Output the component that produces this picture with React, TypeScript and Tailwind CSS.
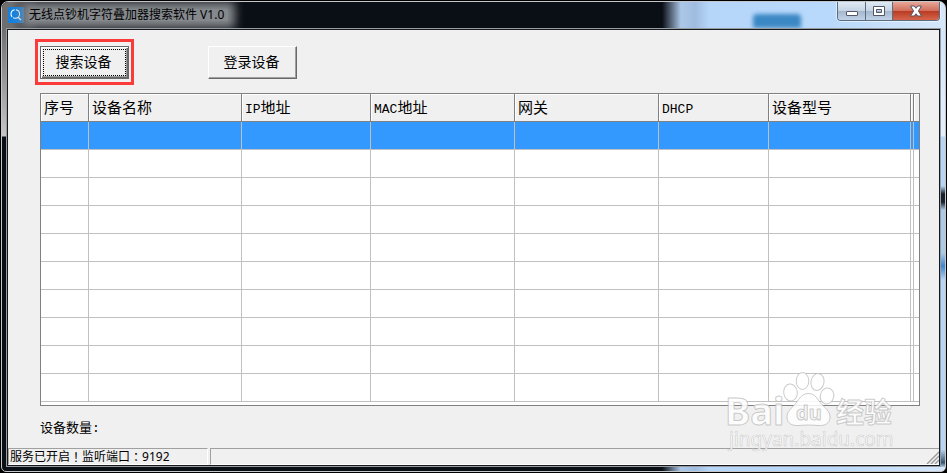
import { clsx } from 'clsx';

const columns = [
  { latin: '', label: '序号', width: 'w-[48px]' },
  { latin: '', label: '设备名称', width: 'w-[153px]' },
  { latin: 'IP', label: '地址', width: 'w-[129px]' },
  { latin: 'MAC', label: '地址', width: 'w-[144px]' },
  { latin: '', label: '网关', width: 'w-[144px]' },
  { latin: 'DHCP', label: '', width: 'w-[110px]' },
  { latin: '', label: '设备型号', width: 'w-[142px]' },
  { latin: '', label: '', width: 'w-[3px]' },
  { latin: '', label: '', width: 'w-[5px]' },
];

const rows = Array.from({ length: 10 }, (_, i) => i);

function AppIcon() {
  return (
    <svg className="w-4 h-4 shrink-0" viewBox="0 0 16 16" fill="none">
      <rect width="16" height="16" rx="1.5" fill="#1480e0" />
      <circle cx="7.3" cy="7" r="4.3" stroke="#fff" strokeWidth="1.1" strokeDasharray="9 1.2" />
      <path d="M10.4 10.4 13 13" stroke="#fff" strokeWidth="1.4" />
    </svg>
  );
}

function CaptionButtons() {
  return (
    <div className="flex h-[19px] rounded-b border border-t-0 border-[#5b6c80] overflow-hidden shadow-[0_0_0_1px_rgba(255,255,255,0.5)]">
      <button
        aria-label="最小化"
        className="w-7 flex items-center justify-center border-r border-[#5b6c80] bg-[linear-gradient(#dfe9f5_0%,#c5d3e3_48%,#a3b6cb_50%,#c0d3e8_100%)]"
      >
        <svg width="14" height="14" viewBox="0 0 14 14">
          <rect x="1.5" y="7.5" width="11" height="4" rx="0.5" fill="#fff" stroke="#535666" />
        </svg>
      </button>
      <button
        aria-label="最大化"
        className="w-[27px] flex items-center justify-center border-r border-[#5b6c80] bg-[linear-gradient(#dfe9f5_0%,#c5d3e3_48%,#a3b6cb_50%,#c0d3e8_100%)]"
      >
        <svg width="14" height="14" viewBox="0 0 14 14">
          <path d="M1.5 2.5h11v9h-11zM4.5 5.5h5v3h-5z" fill="#fff" fillRule="evenodd" stroke="#535666" />
        </svg>
      </button>
      <button
        aria-label="关闭"
        className="w-[46px] flex items-center justify-center bg-[linear-gradient(#e8a798_0%,#d0705c_48%,#b93a22_50%,#d4664c_100%)]"
      >
        <svg width="14" height="14" viewBox="0 0 14 14">
          <path
            d="M1.5 2h3.8L7 4.3 8.7 2h3.8L9.4 7l3.1 5H8.7L7 9.7 5.3 12H1.5l3.1-5z"
            fill="#fff"
            stroke="#535666"
          />
        </svg>
      </button>
    </div>
  );
}

function PushButton({ label, focused }: { label: string; focused?: boolean }) {
  return (
    <button
      className={clsx(
        'w-[89px] h-[33px] p-[2px] bg-[#f0f0f0] text-sm leading-none border',
        focused
          ? 'border-[#696969] shadow-[inset_1px_1px_#fff,inset_-1px_-1px_#696969,inset_-2px_-2px_#a0a0a0]'
          : 'border-t-white border-l-white border-r-[#696969] border-b-[#696969] shadow-[inset_-1px_-1px_#a0a0a0]'
      )}
    >
      <span
        className={clsx(
          'flex h-full items-center justify-center border pr-[2px]',
          focused ? 'border-dotted border-black' : 'border-transparent'
        )}
      >
        {label}
      </span>
    </button>
  );
}

function DeviceTable() {
  return (
    <div className="border border-[#808080] bg-white pb-[3px]">
      <table className="w-full table-fixed border-separate border-spacing-0">
        <thead>
          <tr>
            {columns.map((col, i) => (
              <th
                key={i}
                className={clsx(
                  col.width,
                  'h-7 p-0 pt-1 text-left text-[15px] leading-none font-normal whitespace-nowrap bg-[#f0f0f0] border-b border-[#808080] shadow-[inset_1px_1px_#fff]',
                  i < columns.length - 1 && 'border-r',
                  col.label || col.latin ? 'pl-[3px]' : ''
                )}
              >
                {col.latin && <span className="text-[13px] leading-none">{col.latin}</span>}
                {col.label}
              </th>
            ))}
          </tr>
        </thead>
        <tbody>
          {rows.map((row) => (
            <tr key={row} className={row === 0 ? 'bg-[#3399ff]' : 'bg-white'}>
              {columns.map((_, i) => (
                <td
                  key={i}
                  className={clsx('h-7 p-0 border-b border-[#c0c0c0]', i < columns.length - 1 && 'border-r')}
                />
              ))}
            </tr>
          ))}
        </tbody>
      </table>
    </div>
  );
}

function Watermark() {
  return (
    <svg
      className="absolute right-[42px] bottom-[11px] pointer-events-none font-['Noto_Sans','Noto_Sans_CJK_SC',sans-serif]"
      width="172"
      height="84"
      viewBox="0 0 172 84"
      fill="#fff"
      fillOpacity="0.85"
      stroke="#b5b5b5"
      strokeOpacity="0.7"
      strokeWidth="1"
      strokeLinejoin="round"
    >
      <ellipse cx="64.5" cy="21.5" rx="6.8" ry="8.5" transform="rotate(-8 64.5 21.5)" />
      <ellipse cx="76.5" cy="10" rx="6.3" ry="8.5" />
      <ellipse cx="91.5" cy="11" rx="6.5" ry="8.5" transform="rotate(12 91.5 11)" />
      <ellipse cx="101" cy="25" rx="6.8" ry="8" transform="rotate(14 101 25)" />
      <path d="M82.5 22.5c6 0 8.5 4.5 12 9.5 4.5 5 9.5 8 9.5 14 0 7-6 9-12 8.5-6-.6-13-.6-19 0-6 .5-12-1.5-12-8.5 0-6 5-9 9-14 3.500-5 6.500-9.500 12.500-9.500z" />
      <text x="-1" y="54" fontSize="38" fontWeight="700">Bai</text>
      <text x="70" y="49" fontSize="20" fontWeight="700" fill="#f4f4f4">du</text>
      <text x="110" y="52" fontSize="28" fontWeight="700">经验</text>
      <text x="3" y="75" fontSize="19" strokeWidth="0.6">jingyan.baidu.com</text>
    </svg>
  );
}

function StatusBar() {
  return (
    <footer className="flex gap-[2px] h-[17px] text-xs leading-none font-['Noto_Sans','Noto_Sans_CJK_SC',sans-serif]">
      <div className="w-[200px] flex items-center pl-px whitespace-nowrap border border-t-[#a0a0a0] border-l-[#a0a0a0] border-r-white border-b-white">
        服务已开启<span className="font-['Noto_Sans_CJK_TC',sans-serif]">！</span>
        监听端口<span className="font-['Noto_Sans_CJK_TC',sans-serif]">：</span>9192
      </div>
      <div className="flex-1 flex items-end justify-end border border-r-0 border-t-[#a0a0a0] border-l-[#a0a0a0] border-b-white">
        <svg width="13" height="13" viewBox="0 0 13 13" stroke="#9a9a9a" strokeWidth="1.4">
          <path d="M1 13 13 1M5 13 13 5M9 13 13 9" />
        </svg>
      </div>
    </footer>
  );
}

export default function App() {
  return (
    <div className="h-screen min-h-[420px] flex p-px bg-black">
      <div className="flex-1 flex flex-col overflow-hidden rounded-t-[7px] rounded-b-[5px] border border-[#c3c7ca] bg-[linear-gradient(90deg,#0a0e15_0%,#0a0e15_70%,#acc8e8_72%,#9fbce0_73.5%,#b5d5f9_75%,#b9d9fc_88%,#d6e7fb_100%)]">
        <header className="h-[26px] shrink-0 flex items-start justify-between pl-[6px] pr-[5px] bg-[linear-gradient(90deg,#6e6e70_0,#6e6e70_10px,transparent_36px)]">
          <div className="flex items-center gap-[5px] h-full">
            <AppIcon />
            <h1 className="text-xs leading-[12px] whitespace-nowrap pr-1 font-['Noto_Sans','Noto_Sans_CJK_SC',sans-serif] bg-[#85898d] shadow-[0_0_10px_7px_#85898d]">
              无线点钞机字符叠加器搜索软件 V1.0
            </h1>
          </div>
          <div className="flex items-start h-full">
            <div className="self-end w-12 h-[14px] mr-[36px] rounded-t bg-[#3b88c4] blur-[2px]" />
            <CaptionButtons />
          </div>
        </header>

        <div className="flex-1 min-h-0 flex">
          <div className="w-1 bg-[linear-gradient(#6e6e70_0px,#c9c3c7_108px,#0a0e15_109px)]" />
          <main className="relative flex-1 min-w-0 border border-[#999da0]">
            <div className="h-full flex flex-col border border-[#15191f] bg-[#f0f0f0] text-black font-['Liberation_Mono','Noto_Sans_CJK_SC',monospace]">
              <div className="flex gap-[74px] pl-[27px] pt-[9px]">
                <div className="border-3 border-[#fb3a3a] px-[2px] pt-1 pb-[3px]">
                  <PushButton label="搜索设备" focused />
                </div>
                <div className="pt-[7px]">
                  <PushButton label="登录设备" />
                </div>
              </div>
              <div className="pl-8 pr-[19px] pt-2">
                <DeviceTable />
              </div>
              <p className="flex-1 pl-8 pt-[15px] text-[13px] leading-4">设备数量:</p>
              <StatusBar />
            </div>
            <Watermark />
          </main>
          <div className="w-1 bg-[linear-gradient(#d3e6fc_0px,#e4effc_108px,#b4d6f9_109px,#b4d6f9_158px,#17202b_166px,#17202b_174px,#a9cbea_182px,#a9cbea_225px,#3f86d0_238px,#b4d6f9_252px,#b4d6f9_96%,#33536f_99%,#a9cbea_100%)]" />
        </div>
        <div className="h-1 shrink-0" />
      </div>
    </div>
  );
}
